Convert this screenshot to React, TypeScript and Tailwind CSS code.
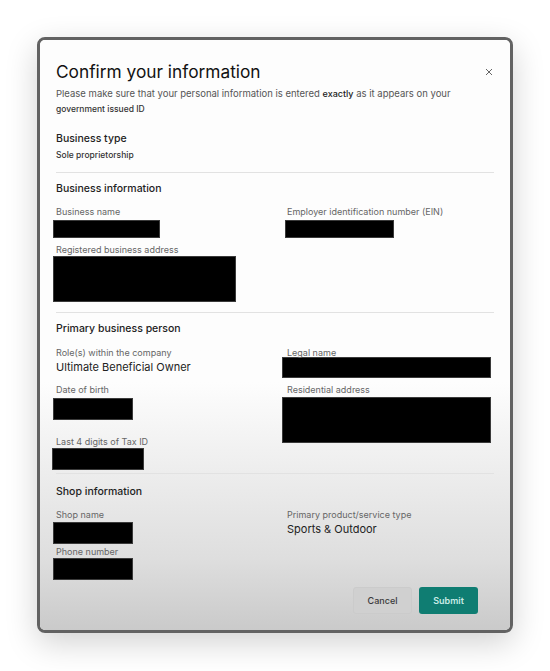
import React from "react";

const Label = ({ children, className = "" }: { children: React.ReactNode; className?: string }) => (
    <div className={`text-[9px] leading-[12px] text-[#666] ${className}`}>{children}</div>
);

const Redact = ({ className = "" }: { className?: string }) => (
    <div className={`bg-black border border-[#3a3a3a] ${className}`} />
);

const Divider = ({ className = "" }: { className?: string }) => (
    <div className={`border-t border-[#e2e2e2] ${className}`} />
);

const SectionTitle = ({ children, className = "" }: { children: React.ReactNode; className?: string }) => (
    <div className={`text-[10.5px] leading-[14px] font-medium text-[#222] ${className}`}>{children}</div>
);

const App = () => {
    return (
        <div className="w-[550px] h-[671px] bg-white pt-[37px] pl-[37px] font-['Inter',sans-serif]">
            {/* Modal frame */}
            <div className="w-[476px] h-[596px] rounded-[8px] border-[3px] border-[#626262] shadow-[0_10px_32px_rgba(0,0,0,0.18)] overflow-hidden">
                <div className="h-full bg-linear-to-b from-[#fdfdfd] from-[58%] via-[#dedede] via-[88%] to-[#cacaca] pl-[16px] pr-[16px] pt-[22px] pb-[16px] flex flex-col">
                    {/* Header */}
                    <div className="flex items-start justify-between">
                        <h1 className="text-[17.3px] leading-[20px] text-[#111]">Confirm your information</h1>
                        <svg width="8" height="8" viewBox="0 0 8 8" className="mt-[6px] mr-[1px] text-[#666]">
                            <path d="M1 1L7 7M7 1L1 7" stroke="currentColor" strokeWidth="1" />
                        </svg>
                    </div>
                    <p className="mt-[4px] text-[9.5px] leading-[15px] text-[#555]">
                        Please make sure that your personal information is entered{" "}
                        <span className="font-medium text-[#222] text-[9px]">exactly</span> as it appears on your
                        <br />
                        <span className="font-medium text-[#333] text-[8.5px]">government issued ID</span>
                    </p>

                    {/* Business type */}
                    <SectionTitle className="mt-[15px]">Business type</SectionTitle>
                    <div className="mt-[2px] text-[8.5px] leading-[14px] font-medium text-[#333]">Sole proprietorship</div>

                    <Divider className="mt-[10px]" />

                    {/* Business information */}
                    <SectionTitle className="mt-[9px]">Business information</SectionTitle>
                    <div className="grid grid-cols-2 gap-x-6 mt-[10px]">
                        <div>
                            <Label>Business name</Label>
                            <Redact className="mt-[2px] -ml-[3px] w-[107px] h-[18px]" />
                            <Label className="mt-[6px]">Registered business address</Label>
                            <Redact className="-ml-[3px] w-[183px] h-[46px]" />
                        </div>
                        <div>
                            <Label>Employer identification number (EIN)</Label>
                            <Redact className="mt-[2px] -ml-[2px] w-[109px] h-[18px]" />
                        </div>
                    </div>

                    <Divider className="mt-[10px]" />

                    {/* Primary business person */}
                    <SectionTitle className="mt-[9px]">Primary business person</SectionTitle>
                    <div className="grid grid-cols-2 gap-x-6 mt-[11px]">
                        <div>
                            <Label>Role(s) within the company</Label>
                            <div className="mt-[1px] text-[11px] leading-[14px] text-[#222]">Ultimate Beneficial Owner</div>
                            <Label className="mt-[10px]">Date of birth</Label>
                            <Redact className="mt-[2px] -ml-[3px] w-[80px] h-[22px]" />
                            <Label className="mt-[16px]">Last 4 digits of Tax ID</Label>
                            <Redact className="-ml-[4px] w-[92px] h-[22px]" />
                        </div>
                        <div>
                            <Label>Legal name</Label>
                            <Redact className="-mt-[2px] -ml-[5px] w-[209px] h-[21px]" />
                            <Label className="mt-[6px]">Residential address</Label>
                            <Redact className="mt-[1px] -ml-[5px] w-[209px] h-[46px]" />
                        </div>
                    </div>

                    <Divider className="mt-[3px]" />

                    {/* Shop information */}
                    <SectionTitle className="mt-[11px]">Shop information</SectionTitle>
                    <div className="grid grid-cols-2 gap-x-6 mt-[10px]">
                        <div>
                            <Label>Shop name</Label>
                            <Redact className="mt-[1px] -ml-[3px] w-[80px] h-[22px]" />
                            <Label className="mt-[2px]">Phone number</Label>
                            <Redact className="-ml-[3px] w-[80px] h-[22px]" />
                        </div>
                        <div>
                            <Label>Primary product/service type</Label>
                            <div className="mt-[1px] text-[11px] leading-[14px] text-[#222]">Sports &amp; Outdoor</div>
                        </div>
                    </div>

                    {/* Actions */}
                    <div className="mt-auto flex justify-end gap-[7px] pr-[16px]">
                        <button className="w-[59px] h-[27px] rounded-[3px] bg-[#d0d0d0] border border-[#cbcbcb] text-[9px] font-medium text-[#3a3a3a]">
                            Cancel
                        </button>
                        <button className="w-[59px] h-[27px] rounded-[3px] bg-[#0f7d72] text-[9px] font-semibold text-[#c8ebe6]">
                            Submit
                        </button>
                    </div>
                </div>
            </div>
        </div>
    );
};

export default App;
